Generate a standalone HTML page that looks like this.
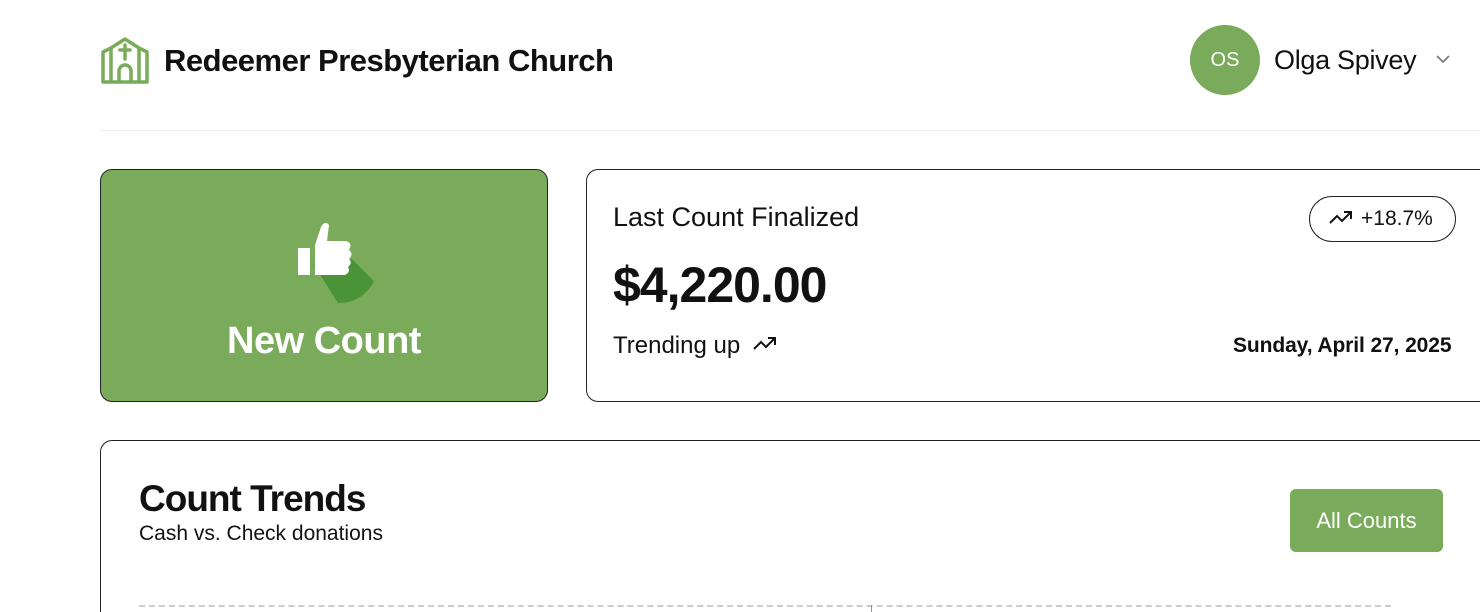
<!DOCTYPE html>
<html style="height:612px;overflow:hidden"><head><style>
body{margin:0;width:1480px;height:612px;overflow:hidden;background:#fff;font-family:"Liberation Sans",sans-serif;color:#111;position:relative}
.a{position:absolute}
</style></head><body>
<svg class="a" style="left:100px;top:36px" width="50" height="48" viewBox="0 0 50 48" fill="none" stroke="#7aab5a" stroke-width="3.5" stroke-linejoin="round" stroke-linecap="round">
<path d="M3 46V16l8-4v34M47 46V16l-8-4v34M11 12l14-9 14 9M3 46h44"/>
<path d="M19 46V35a6 6 0 0 1 12 0v11"/>
<path d="M25 9v14M20 14h10"/>
</svg>
<div class="a" style="left:164px;top:43px;font-size:31px;font-weight:bold;letter-spacing:-0.5px">Redeemer Presbyterian Church</div>
<div class="a" style="left:1190px;top:25px;width:70px;height:70px;border-radius:50%;background:#7aab5a;color:#fff;font-size:20px;text-align:center;line-height:70px">OS</div>
<div class="a" style="left:1274px;top:45px;font-size:27px;letter-spacing:-0.3px">Olga Spivey</div>
<svg class="a" style="left:1436px;top:54px" width="14" height="10"><path d="M1 2l6 6 6-6" stroke="#777" stroke-width="1.6" fill="none"/></svg>
<div class="a" style="left:100px;top:130px;width:1380px;height:1px;background:#eee"></div>

<div class="a" style="left:100px;top:169px;width:446px;height:231px;background:#7aab5a;border:1px solid #222;border-radius:12px"></div>
<svg class="a" style="left:280px;top:215px" width="100" height="95" viewBox="0 0 100 95">
<path d="M34 50 L58 88 A38 38 0 0 0 94 66 L72 44 Z" fill="#4a9337"/>
<path d="M35 30 L41 12 Q45 5 49 10 L47 26 H66 Q73 28 69 35 Q74 39 69 44 Q73 48 68 52 Q71 57 65 60 H35 Z" fill="#fff"/>
<rect x="18" y="33" width="12" height="27" fill="#fff"/>
</svg>
<div class="a" style="left:100px;top:320px;width:448px;text-align:center;color:#fff;font-size:38px;font-weight:bold;letter-spacing:-0.5px">New Count</div>

<div class="a" style="left:586px;top:169px;width:900px;height:231px;border:1px solid #222;border-right:none;border-radius:12px 0 0 12px"></div>
<div class="a" style="left:613px;top:202px;font-size:27px">Last Count Finalized</div>
<div class="a" style="left:1309px;top:196px;width:147px;height:46px;border:1px solid #222;border-radius:23px;box-sizing:border-box"></div>
<svg class="a" style="left:1328px;top:210px" width="26" height="16" viewBox="0 0 26 16" fill="none" stroke="#111" stroke-width="2"><path d="M2 13l7-7 5 5 9-9M16 2h7v7"/></svg>
<div class="a" style="left:1361px;top:207px;font-size:21px">+18.7%</div>
<div class="a" style="left:613px;top:256px;font-size:50px;font-weight:bold;letter-spacing:-1px">$4,220.00</div>
<div class="a" style="left:613px;top:332px;font-size:24px">Trending up</div>
<svg class="a" style="left:752px;top:336px" width="26" height="16" viewBox="0 0 26 16" fill="none" stroke="#111" stroke-width="2"><path d="M2 13l7-7 5 5 9-9M16 2h7v7"/></svg>
<div class="a" style="left:1233px;top:334px;font-size:21px;font-weight:bold;letter-spacing:-0.1px">Sunday, April 27, 2025</div>

<div class="a" style="left:100px;top:440px;width:1380px;height:172px;border:1px solid #222;border-bottom:none;border-right:none;border-radius:12px 0 0 0;box-sizing:border-box"></div>
<div class="a" style="left:139px;top:478px;font-size:37px;font-weight:bold;letter-spacing:-1px">Count Trends</div>
<div class="a" style="left:139px;top:522px;font-size:21px">Cash vs. Check donations</div>
<div class="a" style="left:1290px;top:489px;width:153px;height:63px;background:#7aab5a;border-radius:6px;color:#fff;font-size:22px;text-align:center;line-height:63px">All Counts</div>
<div class="a" style="left:139px;top:605px;width:1252px;border-top:2px dashed #ccc"></div>
<div class="a" style="left:871px;top:605px;width:1px;height:7px;background:#7aab5a"></div>
</body></html>
